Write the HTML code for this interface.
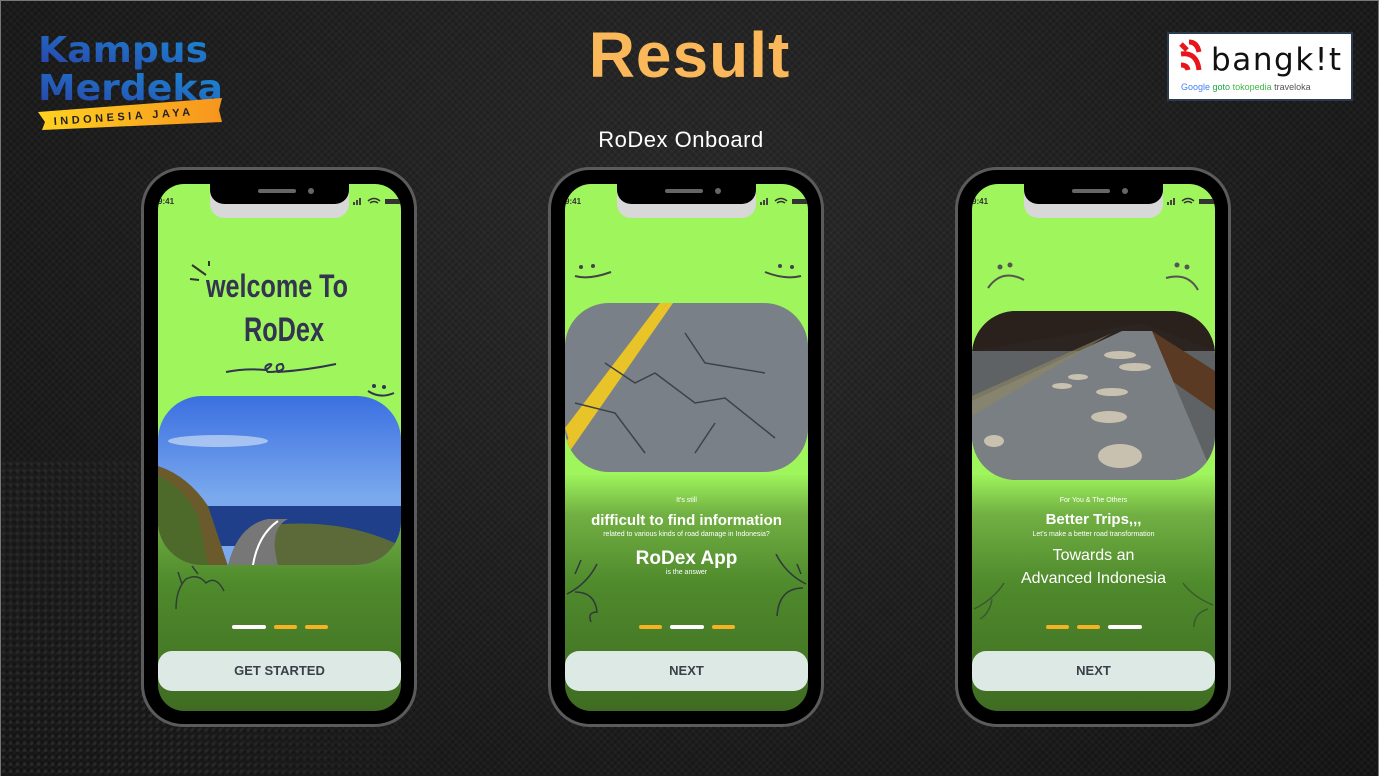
<!DOCTYPE html>
<html><head><meta charset="utf-8"><style>
*{margin:0;padding:0;box-sizing:border-box}
body{width:1379px;height:776px;overflow:hidden;background:#1b1b1b;font-family:"Liberation Sans",sans-serif;position:relative}
.bg{position:absolute;inset:0;background:radial-gradient(ellipse at 50% 30%,#262626 0%,#181818 70%,#121212 100%);border:1px solid #777;border-bottom:none}
.bg:after{content:"";position:absolute;inset:0;background-image:repeating-linear-gradient(45deg,rgba(255,255,255,.025) 0 2px,transparent 2px 5px),repeating-linear-gradient(-45deg,rgba(255,255,255,.025) 0 2px,transparent 2px 5px)}
.hex{position:absolute;left:0;top:460px;width:470px;height:316px;background:radial-gradient(circle,#333 1.6px,transparent 2.2px) 0 0/7px 7px;opacity:.6;-webkit-mask:linear-gradient(60deg,#000 30%,transparent 75%)}
.title{position:absolute;left:0;width:1379px;top:18px;text-align:center;color:#fbb85a;font-weight:bold;font-size:64px;letter-spacing:1px}
.sub{position:absolute;left:0;width:1362px;top:127px;text-align:center;color:#fff;font-size:22px;letter-spacing:.5px}
.km{position:absolute;left:36px;top:28px}
.bk{position:absolute;left:1167px;top:32px;width:186px;height:69px;background:#fff;border:2px solid #2b3a4e}
.phone{position:absolute;top:167px;width:276px;height:560px;border:3px solid #5b5b5b;border-radius:42px;background:#000}
.screen{position:absolute;left:14px;top:14px;width:243px;height:527px;border-radius:26px;overflow:hidden;background:linear-gradient(#9ef55c 0,#9ef55c 290px,#72b043 330px,#4f8a2c 400px,#3f6c22 527px)}
.notch{position:absolute;left:52px;top:0;width:139px;height:34px;background:#d8d8d8;border-radius:0 0 14px 14px}
.notch:before{content:"";position:absolute;left:0;right:0;top:0;height:20px;background:#000;border-radius:0 0 14px 14px}
.notch i{position:absolute;left:48px;top:5px;width:38px;height:4px;background:#666;border-radius:2px}
.notch b{position:absolute;left:98px;top:4px;width:6px;height:6px;background:#666;border-radius:50%}
.time{position:absolute;left:0;top:13px;font-size:8px;color:#333;font-weight:bold}
.stat{position:absolute;right:0;top:12px}
.img{position:absolute;left:0;width:243px;height:169px;border-radius:44px;overflow:hidden}
.dots{position:absolute;top:441px;left:0;width:243px;display:flex;justify-content:center;gap:8px}
.dots span{height:4px;border-radius:2px;background:#f5b324;width:23px}
.dots span.w{background:#fff;width:34px}
.btn{position:absolute;left:0;top:467px;width:243px;height:40px;background:#dde9e4;border-radius:14px;text-align:center;line-height:40px;font-weight:bold;font-size:13px;color:#3a3f4a}
.txt{position:absolute;left:0;width:243px;text-align:center;color:#fff}
</style></head><body>
<div class="bg"></div><div class="hex"></div>

<svg class="km" width="190" height="102" viewBox="0 0 190 102">
<defs><linearGradient id="kg" x1="0" y1="1" x2="1" y2="0"><stop offset="0" stop-color="#2a3fa8"/><stop offset="1" stop-color="#1a8fd8"/></linearGradient>
<linearGradient id="yg" x1="0" x2="1"><stop offset="0" stop-color="#ffd21f"/><stop offset="1" stop-color="#f7951e"/></linearGradient></defs>
<text x="2" y="34" font-family="DejaVu Sans" font-weight="bold" font-size="36" fill="url(#kg)" textLength="170" lengthAdjust="spacingAndGlyphs">Kampus</text>
<text x="2" y="72" font-family="DejaVu Sans" font-weight="bold" font-size="36" fill="url(#kg)" textLength="185" lengthAdjust="spacingAndGlyphs">Merdeka</text>
<polygon points="2,84 186,70 183,82 186,94 6,102 9,94" fill="url(#yg)"/>
<text x="18" y="97" font-family="Liberation Sans" font-size="11" font-weight="bold" fill="#222" letter-spacing="3.5" transform="rotate(-4 18 97)">INDONESIA JAYA</text>
</svg>

<div class="title">Result</div>
<div class="sub">RoDex Onboard</div>

<div class="bk">
<svg width="182" height="65" viewBox="0 0 182 65">
<g fill="none" stroke="#e8161b" stroke-width="5"><path d="M12 10 l6 6"/><path d="M20 8 q8 0 10 10"/><path d="M12 20 q16 -2 18 16"/><path d="M12 31 q6 0 7 5"/></g>
<text x="42" y="36" font-family="DejaVu Sans" font-size="31" fill="#111" textLength="130">bangk!t</text>
<text x="12" y="56" font-family="Liberation Sans" font-size="9"><tspan fill="#4285f4">Google</tspan> <tspan fill="#1aa84a">goto</tspan> <tspan fill="#42b549">tokopedia</tspan> <tspan fill="#555">traveloka</tspan></text>
</svg></div>

<!-- phone 1 -->
<div class="phone" style="left:141px">
<div class="screen">
<div class="time">9:41</div>
<svg class="stat" width="48" height="10"><rect x="0" y="6" width="2" height="3" fill="#444"/><rect x="3" y="4" width="2" height="5" fill="#444"/><rect x="6" y="2" width="2" height="7" fill="#444"/><path d="M15 5 q6 -5 12 0 M17 7 q4 -3 8 0" stroke="#333" stroke-width="1.5" fill="none"/><rect x="32" y="3" width="16" height="5" fill="#333"/></svg>
<div class="notch"><i></i><b></b></div>
<svg style="position:absolute;left:30px;top:75px" width="215" height="140">
<path d="M4 6 l14 10 M2 20 l9 1 M21 2 v5" stroke="#333" stroke-width="2"/>
<text x="18" y="38" font-family="Liberation Sans Narrow,Liberation Sans" font-weight="bold" font-size="32" fill="#333352" textLength="142" lengthAdjust="spacingAndGlyphs">welcome To</text>
<text x="56" y="82" font-family="Liberation Sans Narrow,Liberation Sans" font-weight="bold" font-size="34" fill="#333352" textLength="80" lengthAdjust="spacingAndGlyphs">RoDex</text>
<path d="M38 113 q20 -4 40 -2 q8 -6 4 -6 q-8 2 -2 8 q20 0 14 -8 q-8 0 -4 8 q30 -2 58 -8" stroke="#333352" stroke-width="2" fill="none"/>
<circle cx="186" cy="127" r="2" fill="#333352"/><circle cx="196" cy="128" r="2" fill="#333352"/><path d="M180 132 q12 8 26 2" stroke="#333352" stroke-width="2" fill="none"/>
</svg>
<div class="img" style="top:212px">
<svg width="243" height="169" viewBox="0 0 243 169"><defs><linearGradient id="sky" x1="0" y1="0" x2="0" y2="1"><stop offset="0" stop-color="#3b6fe0"/><stop offset=".6" stop-color="#7aa9ee"/></linearGradient></defs>
<rect width="243" height="169" fill="url(#sky)"/><ellipse cx="60" cy="45" rx="50" ry="6" fill="#c8dcf5" opacity=".7"/>
<rect y="110" width="243" height="40" fill="#1f3f8a"/><path d="M0 70 q30 10 50 40 l20 60 H0z" fill="#6b5a2c"/><path d="M0 80 q25 10 40 40 l10 50 H0z" fill="#4e6a2a"/>
<path d="M243 150 q-60 -30 -140 -20 l-20 40 H243z" fill="#5c6a3a"/><path d="M70 169 q10 -40 40 -46 l20 0 q-20 10 -10 46z" fill="#777"/><path d="M95 169 q5 -30 25 -44" stroke="#fff" stroke-width="2" fill="none"/></svg></div>
<svg style="position:absolute;left:10px;top:380px" width="70" height="50"><path d="M8 45 q0 -20 10 -30 q12 -6 20 4 q10 -8 18 8 M14 20 l-4 -12 M30 10 l-6 -8" stroke="#2f3f33" stroke-width="1.5" fill="none"/></svg>
<div class="dots"><span class="w"></span><span></span><span></span></div>
<div class="btn">GET STARTED</div>
</div>
</div>

<!-- phone 2 -->
<div class="phone" style="left:548px">
<div class="screen">
<div class="time">9:41</div>
<svg class="stat" width="48" height="10"><rect x="0" y="6" width="2" height="3" fill="#444"/><rect x="3" y="4" width="2" height="5" fill="#444"/><rect x="6" y="2" width="2" height="7" fill="#444"/><path d="M15 5 q6 -5 12 0 M17 7 q4 -3 8 0" stroke="#333" stroke-width="1.5" fill="none"/><rect x="32" y="3" width="16" height="5" fill="#333"/></svg>
<div class="notch"><i></i><b></b></div>
<svg style="position:absolute;left:0;top:70px" width="243" height="40"><circle cx="16" cy="13" r="2" fill="#444"/><circle cx="28" cy="12" r="2" fill="#444"/><path d="M10 22 q14 4 36 -4" stroke="#444" stroke-width="2" fill="none"/><circle cx="215" cy="12" r="2" fill="#444"/><circle cx="227" cy="13" r="2" fill="#444"/><path d="M200 18 q20 8 36 4" stroke="#444" stroke-width="2" fill="none"/></svg>
<div class="img" style="top:119px">
<svg width="243" height="169" viewBox="0 0 243 169"><rect width="243" height="169" fill="#6e757c"/><rect width="243" height="169" fill="#8a9298" opacity=".4"/>
<path d="M0 125 L95 0 L102 0 L5 140z" fill="#e8c428"/><path d="M0 140 L102 0 L108 0 L0 155z" fill="#e8c428"/>
<path d="M40 60 l30 20 l20 -10 l40 30 l30 -5 l50 40 M120 30 l20 30 l60 10 M10 100 l40 10 l30 40 M150 120 l-20 30" stroke="#3d4246" stroke-width="1.5" fill="none"/></svg></div>
<div class="txt" style="top:313px;font-size:7px">It's still</div>
<div class="txt" style="top:328px;font-size:15px;font-weight:bold">difficult to find information</div>
<div class="txt" style="top:347px;font-size:7px">related to various kinds of road damage in Indonesia?</div>
<div class="txt" style="top:364px;font-size:19px;font-weight:bold">RoDex App</div>
<div class="txt" style="top:385px;font-size:7px">is the answer</div>
<svg style="position:absolute;left:0;top:370px" width="243" height="70"><path d="M2 40 q20 -10 30 -30 M10 38 q20 0 22 20 q-10 0 -6 10 M16 6 l-6 14" stroke="#2f3a3a" stroke-width="1.5" fill="none"/><path d="M241 30 q-20 -10 -30 -30 M238 34 q-24 0 -26 28 M232 10 l4 10" stroke="#2f3a3a" stroke-width="1.5" fill="none"/></svg>
<div class="dots"><span></span><span class="w"></span><span></span></div>
<div class="btn">NEXT</div>
</div>
</div>

<!-- phone 3 -->
<div class="phone" style="left:955px">
<div class="screen">
<div class="time">9:41</div>
<svg class="stat" width="48" height="10"><rect x="0" y="6" width="2" height="3" fill="#444"/><rect x="3" y="4" width="2" height="5" fill="#444"/><rect x="6" y="2" width="2" height="7" fill="#444"/><path d="M15 5 q6 -5 12 0 M17 7 q4 -3 8 0" stroke="#333" stroke-width="1.5" fill="none"/><rect x="32" y="3" width="16" height="5" fill="#333"/></svg>
<div class="notch"><i></i><b></b></div>
<svg style="position:absolute;left:0;top:78px" width="243" height="40"><circle cx="28" cy="5" r="2.5" fill="#555"/><circle cx="38" cy="3" r="2.5" fill="#555"/><path d="M16 26 q14 -20 36 -8" stroke="#555" stroke-width="2" fill="none"/><circle cx="205" cy="3" r="2.5" fill="#555"/><circle cx="215" cy="5" r="2.5" fill="#555"/><path d="M194 16 q22 -6 32 12" stroke="#555" stroke-width="2" fill="none"/></svg>
<div class="img" style="top:127px">
<svg width="243" height="169" viewBox="0 0 243 169"><rect width="243" height="169" fill="#5e6265"/><rect width="243" height="40" fill="#2b2420"/><path d="M0 40 L170 12 L243 40 V0 H0z" fill="#2a211d"/><path d="M180 20 L243 60 V100 L200 70z" fill="#5a3a22"/>
<path d="M0 90 L150 20 L180 20 L243 169 H0z" fill="#7a7f83"/><path d="M0 85 L140 22 L0 105z" fill="#8e8660" opacity=".6"/>
<g fill="#c9c1b0"><ellipse cx="148" cy="44" rx="16" ry="4"/><ellipse cx="163" cy="56" rx="16" ry="4"/><ellipse cx="140" cy="81" rx="16" ry="4"/><ellipse cx="148" cy="145" rx="22" ry="12"/><ellipse cx="137" cy="106" rx="18" ry="6"/><ellipse cx="106" cy="66" rx="10" ry="3"/><ellipse cx="90" cy="75" rx="10" ry="3"/><ellipse cx="22" cy="130" rx="10" ry="6"/></g></svg></div>
<div class="txt" style="top:313px;font-size:7px">For You &amp; The Others</div>
<div class="txt" style="top:327px;font-size:15px;font-weight:bold">Better Trips,,,</div>
<div class="txt" style="top:347px;font-size:7px">Let's make a better road transformation</div>
<div class="txt" style="top:360px;font-size:16px;line-height:23px">Towards an<br>Advanced Indonesia</div>
<svg style="position:absolute;left:0;top:395px" width="243" height="50"><path d="M2 30 q20 -10 30 -26 M8 40 q10 -6 12 -20" stroke="#3a5a30" stroke-width="1.5" fill="none"/><path d="M241 26 q-20 -8 -30 -22 M236 30 q-14 4 -14 18" stroke="#3a5a30" stroke-width="1.5" fill="none"/></svg>
<div class="dots"><span></span><span></span><span class="w"></span></div>
<div class="btn">NEXT</div>
</div>
</div>
</body></html>
